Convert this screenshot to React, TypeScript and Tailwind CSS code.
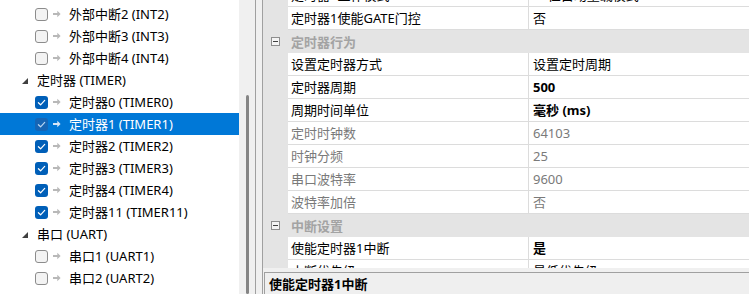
import React from "react";

type TreeRow =
  | { kind: "group"; label: string }
  | { kind: "item"; label: string; checked: boolean; selected?: boolean };

const treeRows: TreeRow[] = [
  { kind: "item", label: "外部中断2 (INT2)", checked: false },
  { kind: "item", label: "外部中断3 (INT3)", checked: false },
  { kind: "item", label: "外部中断4 (INT4)", checked: false },
  { kind: "group", label: "定时器 (TIMER)" },
  { kind: "item", label: "定时器0 (TIMER0)", checked: true },
  { kind: "item", label: "定时器1 (TIMER1)", checked: true, selected: true },
  { kind: "item", label: "定时器2 (TIMER2)", checked: true },
  { kind: "item", label: "定时器3 (TIMER3)", checked: true },
  { kind: "item", label: "定时器4 (TIMER4)", checked: true },
  { kind: "item", label: "定时器11 (TIMER11)", checked: true },
  { kind: "group", label: "串口 (UART)" },
  { kind: "item", label: "串口1 (UART1)", checked: false },
  { kind: "item", label: "串口2 (UART2)", checked: false },
  { kind: "item", label: "串口3 (UART3)", checked: false },
];

type GridRow =
  | { kind: "cat"; label: string }
  | { kind: "prop"; name: string; value: string; disabled?: boolean; bold?: boolean };

const gridRows: GridRow[] = [
  { kind: "prop", name: "定时器1工作模式", value: "16位自动重载模式" },
  { kind: "prop", name: "定时器1使能GATE门控", value: "否" },
  { kind: "cat", label: "定时器行为" },
  { kind: "prop", name: "设置定时器方式", value: "设置定时周期" },
  { kind: "prop", name: "定时器周期", value: "500", bold: true },
  { kind: "prop", name: "周期时间单位", value: "毫秒 (ms)", bold: true },
  { kind: "prop", name: "定时时钟数", value: "64103", disabled: true },
  { kind: "prop", name: "时钟分频", value: "25", disabled: true },
  { kind: "prop", name: "串口波特率", value: "9600", disabled: true },
  { kind: "prop", name: "波特率加倍", value: "否", disabled: true },
  { kind: "cat", label: "中断设置" },
  { kind: "prop", name: "使能定时器1中断", value: "是", bold: true },
  { kind: "prop", name: "中断优先级", value: "最低优先级" },
];

function CheckBox({ checked, selected }: { checked: boolean; selected?: boolean }) {
  if (!checked) {
    return (
      <div className="h-[13px] w-[13px] shrink-0 rounded-[3px] border border-[#8c8c8c] bg-[#f3f3f3]" />
    );
  }
  return (
    <div
      className={
        selected
          ? "flex h-[13px] w-[13px] shrink-0 items-center justify-center rounded-[3px] bg-[#1565b5]"
          : "flex h-[13px] w-[13px] shrink-0 items-center justify-center rounded-[3px] bg-[#005fb8]"
      }
    >
      <svg width="13" height="13" viewBox="0 0 13 13">
        <path
          d="M3.4 6.7 L5.6 8.8 L9.7 4.4"
          fill="none"
          stroke={selected ? "#b9d6f2" : "#ffffff"}
          strokeWidth="1.2"
          strokeLinecap="round"
          strokeLinejoin="round"
        />
      </svg>
    </div>
  );
}

function Arrow({ selected }: { selected?: boolean }) {
  return (
    <svg width="8" height="8" viewBox="0 0 8 8" className="shrink-0">
      <path d="M0 3.1h4.3V0.8L7.6 4 4.3 7.2V4.9H0z" fill={selected ? "#d6e6f7" : "#b8b8b8"} />
    </svg>
  );
}

function Tree() {
  return (
    <div className="w-[239px] shrink-0 overflow-hidden bg-white pt-[3px]">
      {treeRows.map((r, i) =>
        r.kind === "group" ? (
          <div key={i} className="flex h-[22px] items-center pl-[22px] text-black">
            <svg width="6" height="6" viewBox="0 0 6 6" className="mt-[2px] shrink-0">
              <polygon points="6,0 6,6 0,6" fill="#404040" />
            </svg>
            <span className="ml-[9px] whitespace-nowrap">{r.label}</span>
          </div>
        ) : (
          <div
            key={i}
            className={
              r.selected
                ? "flex h-[22px] items-center bg-[#0078d7] pl-[35px] text-white"
                : "flex h-[22px] items-center pl-[35px] text-black"
            }
          >
            <CheckBox checked={r.checked} selected={r.selected} />
            <span className="ml-[5px] flex items-center">
              <Arrow selected={r.selected} />
            </span>
            <span className="ml-[8px] whitespace-nowrap">{r.label}</span>
          </div>
        )
      )}
    </div>
  );
}

function MinusBox() {
  return (
    <div className="flex h-[9px] w-[9px] items-center justify-center border border-[#8e8e8e] bg-[#f4f4f4]">
      <div className="h-px w-[5px] bg-[#404040]" />
    </div>
  );
}

function Grid() {
  return (
    <div className="h-[268px] shrink-0 overflow-hidden bg-white">
      <div className="mt-[-16px]">
        {gridRows.map((r, i) =>
          r.kind === "cat" ? (
            <div key={i} className="flex h-[23px] items-center bg-[#e4e4e4]">
              <div className="flex w-[25px] shrink-0 items-center justify-center">
                <MinusBox />
              </div>
              <span className="pl-[3px] font-bold text-[#a3a3a3]">{r.label}</span>
            </div>
          ) : (
            <div key={i} className="flex h-[23px]">
              <div className="w-[25px] shrink-0 bg-[#e4e4e4]" />
              <div
                className={
                  r.disabled
                    ? "flex w-[241px] shrink-0 items-center border-r border-b border-[#dcdcdc] pl-[3px] text-[#7a7a7a]"
                    : "flex w-[241px] shrink-0 items-center border-r border-b border-[#dcdcdc] pl-[3px] text-black"
                }
              >
                <span className="whitespace-nowrap">{r.name}</span>
              </div>
              <div
                className={
                  r.disabled
                    ? "flex flex-1 items-center border-b border-[#dcdcdc] pl-[4px] text-[#7a7a7a]"
                    : r.bold
                    ? "flex flex-1 items-center border-b border-[#dcdcdc] pl-[4px] font-bold text-black"
                    : "flex flex-1 items-center border-b border-[#dcdcdc] pl-[4px] text-black"
                }
              >
                <span className="whitespace-nowrap">{r.value}</span>
              </div>
            </div>
          )
        )}
      </div>
    </div>
  );
}

export default function App() {
  return (
    <div
      className="flex h-[294px] w-[749px] overflow-hidden bg-[#f0f0f0] text-[13px] leading-[18px]"
      style={{ fontFamily: '"Noto Sans", "Noto Sans CJK SC", sans-serif' }}
    >
      <div className="flex w-[256px] shrink-0 border-r border-[#a0a0a0]">
        <Tree />
        <div className="flex flex-1 flex-col bg-[#f0f0f0] pl-[7px] pt-[95px]">
          <div className="w-[3px] flex-1 rounded-full bg-[#858585]" />
        </div>
      </div>
      <div className="w-[6px] shrink-0" />
      <div className="flex flex-1 flex-col border-l border-[#a0a0a0]">
        <Grid />
        <div className="h-[4px] shrink-0" />
        <div className="ml-[1px] flex-1 border-l border-t border-[#a0a0a0] bg-[#efefef] pl-[4px] pt-[2px]">
          <span className="font-bold text-black">使能定时器1中断</span>
        </div>
      </div>
    </div>
  );
}
